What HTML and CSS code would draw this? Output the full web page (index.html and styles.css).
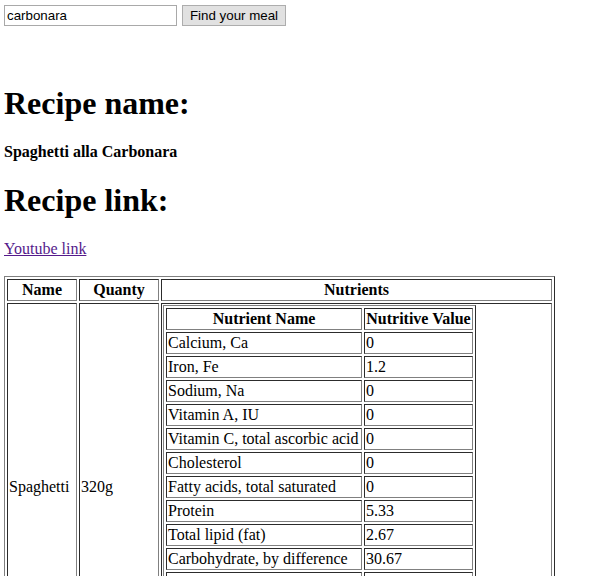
FILE: index.html
```html
<!DOCTYPE html>
<html>
<head>
<meta charset="utf-8">
<link rel="stylesheet" href="styles.css">
</head>
<body>
<form class="search">
<input type="text" class="query" value="carbonara"> <button type="button" class="find">Find your meal</button>
</form>
<div class="result">
<h1>Recipe name:</h1>
<h4>Spaghetti alla Carbonara</h4>
<h1>Recipe link:</h1>
<a class="link" href="#">Youtube link</a>
<br><br>
<table border="1" class="recipe">
<tr><th class="c-name">Name</th><th class="c-qty">Quanty</th><th>Nutrients</th></tr>
<tr>
<td>Spaghetti</td><td>320g</td>
<td>
<table border="1" class="nutrients">
<tr><th class="n-name">Nutrient Name</th><th class="n-val">Nutritive Value</th></tr>
<tr><td>Calcium, Ca</td><td>0</td></tr>
<tr><td>Iron, Fe</td><td>1.2</td></tr>
<tr><td>Sodium, Na</td><td>0</td></tr>
<tr><td>Vitamin A, IU</td><td>0</td></tr>
<tr><td>Vitamin C, total ascorbic acid</td><td>0</td></tr>
<tr><td>Cholesterol</td><td>0</td></tr>
<tr><td>Fatty acids, total saturated</td><td>0</td></tr>
<tr><td>Protein</td><td>5.33</td></tr>
<tr><td>Total lipid (fat)</td><td>2.67</td></tr>
<tr><td>Carbohydrate, by difference</td><td>30.67</td></tr>
<tr><td>Energy</td><td>160</td></tr>
<tr><td>Sugars, total</td><td>1.33</td></tr>
<tr><td>Fiber, total dietary</td><td>1.3</td></tr>
<tr><td>Fatty acids, total trans</td><td>0</td></tr>
</table>
</td>
</tr>
</table>
</div>
</body>
</html>
```
FILE: styles.css
```css
body {
  margin: 5px 4px;
  font-family: "Liberation Serif", "Times New Roman", serif;
  font-size: 16px;
  color: #000;
  background: #fff;
}
.search {
  margin: 0;
}
.query {
  font-family: "Liberation Sans", Arial, sans-serif;
  font-size: 13.33px;
  width: 173px;
  height: 21px;
  box-sizing: border-box;
  border: 1px solid #a9a9a9;
  padding: 1px 2px;
  margin: 0;
}
.find {
  font-family: "Liberation Sans", Arial, sans-serif;
  font-size: 13.33px;
  width: 104px;
  height: 21px;
  box-sizing: border-box;
  border: 1px solid #adadad;
  background: #e1e1e1;
  padding: 1px 4px;
  margin: 0 0 0 1px;
}
.result {
  margin-top: 59px;
}
h1 {
  font-size: 32px;
  margin: 21px 0;
}
h4 {
  font-size: 16px;
  margin: 21px 0;
}
.link {
  color: #551a8b;
}
.recipe {
  width: 551px;
}
.recipe th,
.recipe td {
  white-space: nowrap;
}
.c-name {
  width: 66px;
}
.c-qty {
  width: 76px;
}
.n-name {
  width: 192px;
}
.n-val {
  width: 105px;
}
```
